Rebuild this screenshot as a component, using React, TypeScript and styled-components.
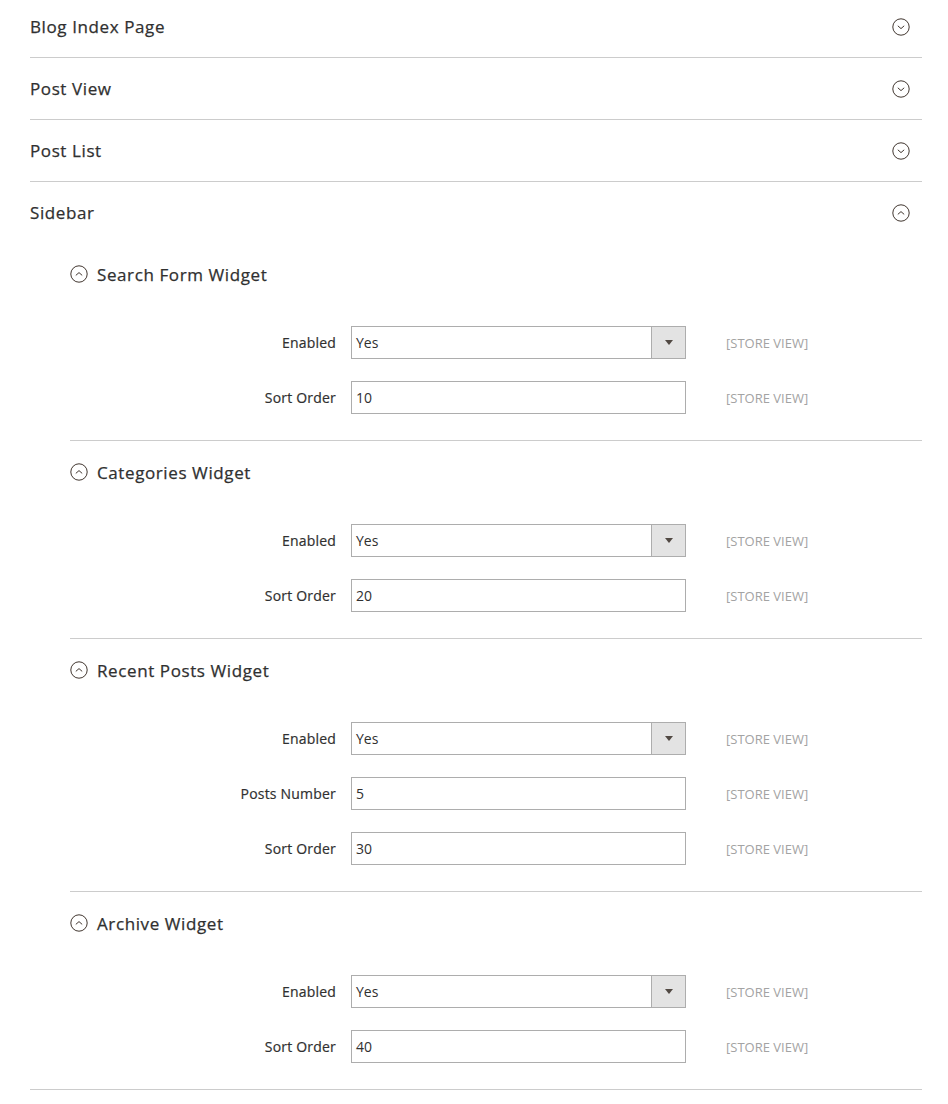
import React from "react";
import styled, { createGlobalStyle } from "styled-components";

const Global = createGlobalStyle`
  html, body { margin: 0; padding: 0; background: #fff; }
  body { font-family: "Open Sans", "Liberation Sans", sans-serif; color: #303030; }
`;

const Page = styled.div`
  padding: 0 26px 0 30px;
  margin-top: -4px;
`;

const Section = styled.section`
  border-bottom: 1px solid #cccccc;
`;

const SectionHeader = styled.div`
  height: 61px;
  display: flex;
  align-items: center;
  justify-content: space-between;
  padding-right: 12px;
`;

const SectionTitle = styled.span`
  font-size: 17px;
  font-weight: 400;
  letter-spacing: 0.6px;
  color: #303030;
  -webkit-text-stroke: 0.25px #303030;
`;

const SectionBody = styled.div`
  padding-left: 40px;
`;

const Group = styled.div<{ $last?: boolean }>`
  border-bottom: ${(p) => (p.$last ? "none" : "1px solid #cccccc")};
  padding-bottom: 26px;
`;

const GroupHeader = styled.div`
  height: 62px;
  display: flex;
  align-items: center;
  gap: 9px;
`;

const GroupTitle = styled.span`
  font-size: 17px;
  font-weight: 400;
  letter-spacing: 0.6px;
  color: #303030;
  -webkit-text-stroke: 0.25px #303030;
`;

const Rows = styled.div`
  padding-top: 21px;
  display: flex;
  flex-direction: column;
  gap: 22px;
`;

const Row = styled.div`
  display: grid;
  grid-template-columns: 266px 335px auto;
  column-gap: 15px;
  align-items: center;
`;

const Label = styled.label`
  text-align: right;
  font-size: 14px;
  font-weight: 400;
  letter-spacing: 0.2px;
  color: #303030;
  -webkit-text-stroke: 0.2px #303030;
`;

const FieldBox = styled.div`
  height: 33px;
  box-sizing: border-box;
  border: 1px solid #adadad;
  display: flex;
  align-items: center;
  font-size: 14px;
  color: #303030;
  background: #fff;
`;

const FieldValue = styled.span`
  flex: 1;
  padding-left: 4px;
`;

const SelectArrow = styled.span`
  width: 33px;
  height: 100%;
  border-left: 1px solid #adadad;
  background: #e3e3e3;
  display: flex;
  align-items: center;
  justify-content: center;
  &::after {
    content: "";
    border-left: 4px solid transparent;
    border-right: 4px solid transparent;
    border-top: 5px solid #514943;
  }
`;

const Scope = styled.span`
  margin-left: 25px;
  font-size: 13px;
  color: #a3a3a3;
  text-transform: uppercase;
`;

const Chevron = ({ up }: { up?: boolean }) => (
  <svg width="18" height="18" viewBox="0 0 18 18" style={{ display: "block" }}>
    <circle cx="9" cy="9" r="8.2" fill="none" stroke="#41362f" strokeWidth="1" />
    <path
      d={up ? "M5.8 10.4 L9 7.6 L12.2 10.4" : "M5.8 7.8 L9 10.6 L12.2 7.8"}
      fill="none"
      stroke="#41362f"
      strokeWidth="1"
    />
  </svg>
);

type Field = { label: string; value: string; select?: boolean };

const groups: { title: string; fields: Field[] }[] = [
  {
    title: "Search Form Widget",
    fields: [
      { label: "Enabled", value: "Yes", select: true },
      { label: "Sort Order", value: "10" },
    ],
  },
  {
    title: "Categories Widget",
    fields: [
      { label: "Enabled", value: "Yes", select: true },
      { label: "Sort Order", value: "20" },
    ],
  },
  {
    title: "Recent Posts Widget",
    fields: [
      { label: "Enabled", value: "Yes", select: true },
      { label: "Posts Number", value: "5" },
      { label: "Sort Order", value: "30" },
    ],
  },
  {
    title: "Archive Widget",
    fields: [
      { label: "Enabled", value: "Yes", select: true },
      { label: "Sort Order", value: "40" },
    ],
  },
];

export default function App() {
  return (
    <>
      <Global />
      <Page>
        {["Blog Index Page", "Post View", "Post List"].map((t) => (
          <Section key={t}>
            <SectionHeader>
              <SectionTitle>{t}</SectionTitle>
              <Chevron />
            </SectionHeader>
          </Section>
        ))}
        <Section>
          <SectionHeader>
            <SectionTitle>Sidebar</SectionTitle>
            <Chevron up />
          </SectionHeader>
          <SectionBody>
            {groups.map((g, gi) => (
              <Group key={g.title} $last={gi === groups.length - 1}>
                <GroupHeader>
                  <Chevron up />
                  <GroupTitle>{g.title}</GroupTitle>
                </GroupHeader>
                <Rows>
                  {g.fields.map((f) => (
                    <Row key={f.label}>
                      <Label>{f.label}</Label>
                      <FieldBox>
                        <FieldValue>{f.value}</FieldValue>
                        {f.select && <SelectArrow />}
                      </FieldBox>
                      <Scope>[Store View]</Scope>
                    </Row>
                  ))}
                </Rows>
              </Group>
            ))}
          </SectionBody>
        </Section>
      </Page>
    </>
  );
}
